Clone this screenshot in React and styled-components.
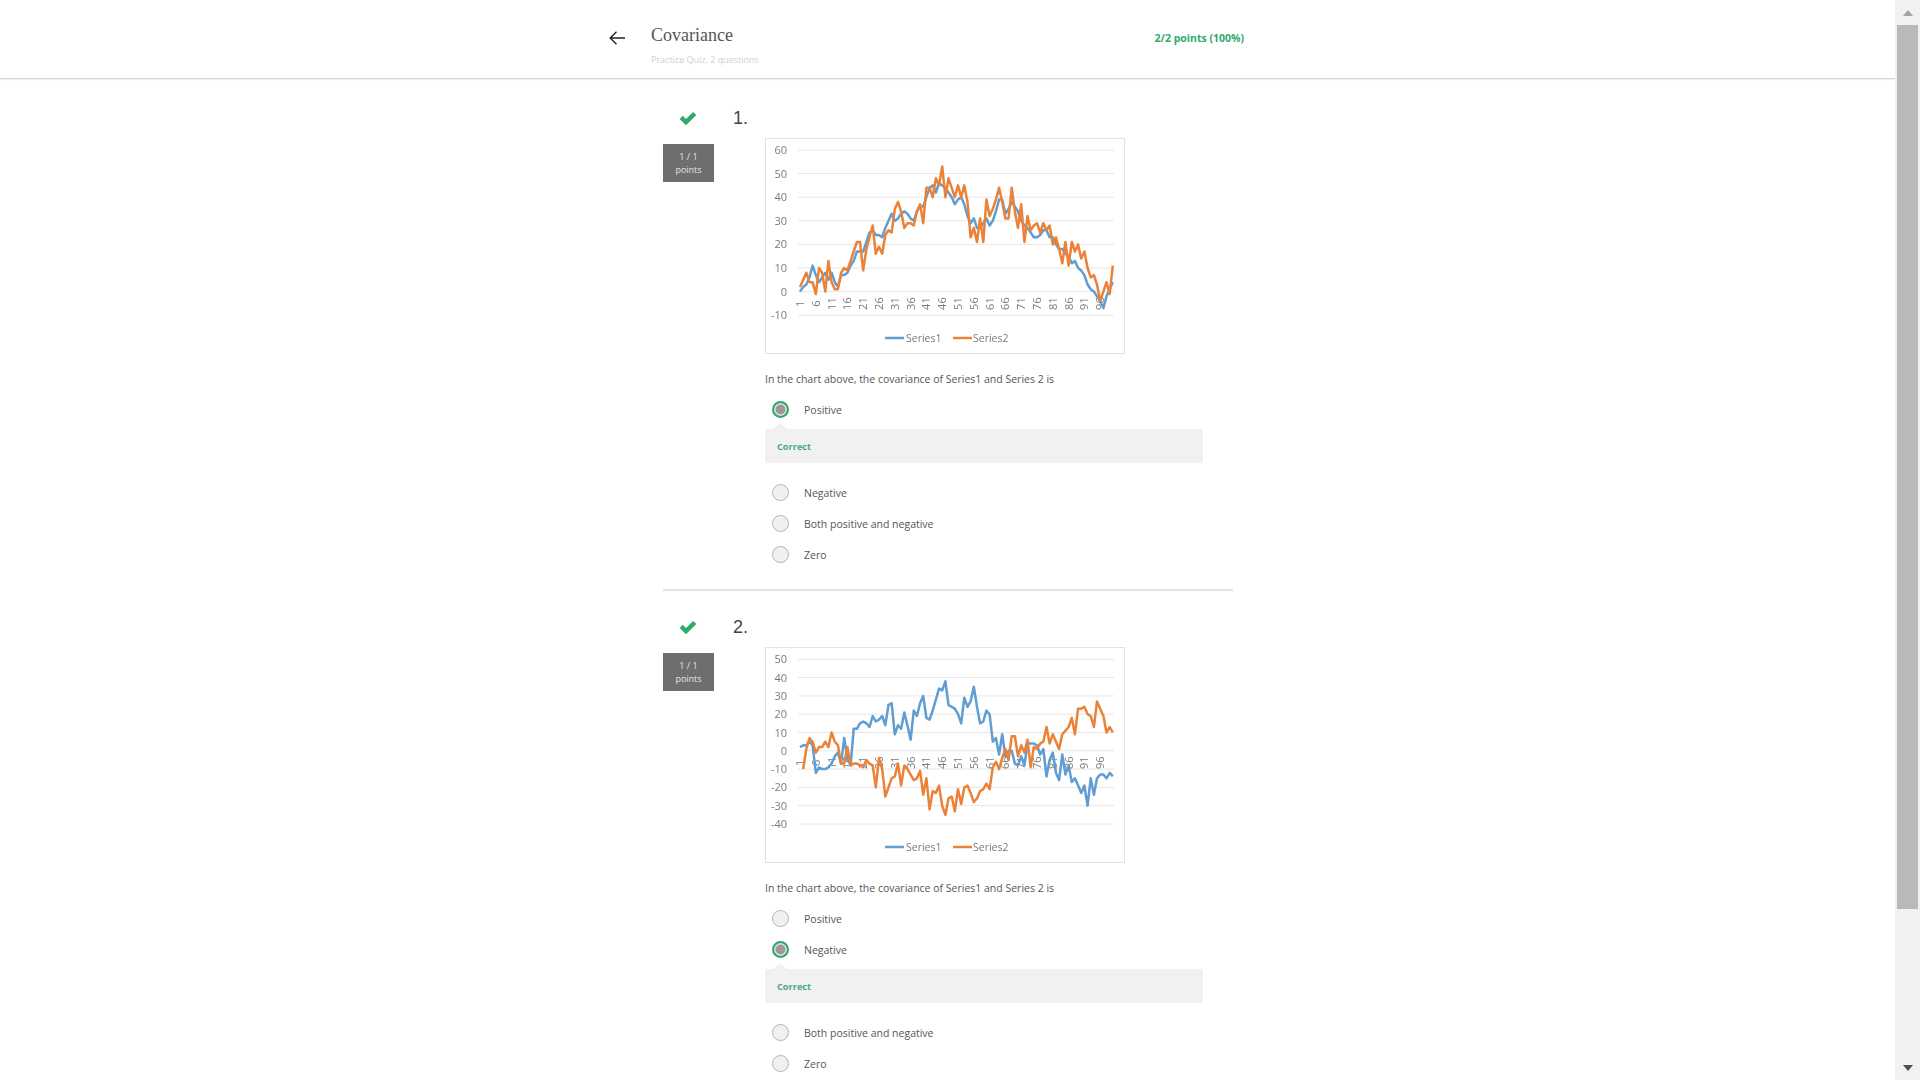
import React from 'react';
import styled, { createGlobalStyle } from 'styled-components';

const GlobalStyle = createGlobalStyle`
  html, body {
    margin: 0;
    height: 100%;
    overflow: hidden;
    background: #fff;
    font-family: "Open Sans", "Liberation Sans", sans-serif;
  }
`;

const chartOne = {
  max: 60,
  min: -10,
  gridTop: 11,
  gridStep: 23.6,
  blue: [0,2,3,6,11,7,4,6,8,5,8,4,2,7,7,8,11,13,17,17,17,21,25,26,24,24,23,27,30,33,30,31,33,34,33,31,30,34,36,36,40,44,45,42,46,45,44,42,40,37,39,40,37,32,29,31,27,27,29,31,28,30,34,39,39,33,35,38,36,34,30,28,27,25,23,23,24,26,26,23,23,20,18,18,16,15,12,13,10,9,7,3,1,0,-2,-4,-7,-2,1,4],
  orange: [2,5,8,4,4,-1,10,8,0,13,4,1,1,8,10,9,13,17,21,21,9,18,23,28,16,19,16,24,26,25,35,38,34,27,29,29,28,34,37,29,44,44,40,48,45,53,40,48,44,40,45,40,45,38,23,27,21,31,21,39,32,35,39,44,38,31,31,44,34,27,37,21,32,26,28,29,25,29,26,28,20,23,18,12,21,11,21,17,20,14,17,10,6,7,3,-4,0,4,-1,11],
};

const chartTwo = {
  max: 50,
  min: -40,
  gridTop: 11.3,
  gridStep: 18.3,
  blue: [2,3,3,5,3,-12,-9,-10,-10,-9,-7,-3,-1,-7,7,-4,-8,12,12,15,16,15,13,19,16,17,19,14,25,26,9,14,12,21,14,6,22,19,26,30,18,17,22,28,34,33,38,25,24,23,20,15,29,24,27,35,24,15,16,22,20,5,7,-2,9,-3,0,0,-7,-8,-3,-8,4,4,4,3,-2,1,-14,-5,-1,-12,-16,-2,-13,-8,-17,-15,-19,-23,-19,-30,-15,-24,-15,-13,-13,-15,-12,-14],
  orange: [null,-10,1,7,5,-1,2,2,5,2,10,5,3,-7,-7,2,-8,-7,-7,-8,-9,-5,-7,-8,-20,-4,-10,-25,-20,-15,-14,-7,-19,-8,-10,-13,-16,-15,-11,-24,-15,-32,-22,-23,-19,-30,-35,-26,-25,-33,-21,-29,-20,-19,-23,-28,-26,-22,-21,-18,-21,-9,-6,-10,-4,1,-5,8,8,-3,3,-1,6,-9,2,1,4,5,13,4,9,5,1,9,11,13,18,9,23,23,24,20,19,13,27,23,19,10,13,10],
};

const AXIS_LEFT = 32;
const AXIS_RIGHT = 348;
const POINT_LEFT = 34;
const POINT_STEP = 3.16;
const BLUE = '#5f9dd3';
const ORANGE = '#ec8238';

const questions = [
  { id: 1, chart: chartOne, picked: 'Positive' },
  { id: 2, chart: chartTwo, picked: 'Negative' },
];

const answers = ['Positive', 'Negative', 'Both positive and negative', 'Zero'];

function ChartPicture({ chart }) {
  const toY = (value) => chart.gridTop + ((chart.max - value) / 10) * chart.gridStep;
  const toPoints = (values) =>
    values
      .map((v, i) => (v === null ? null : `${(POINT_LEFT + i * POINT_STEP).toFixed(1)},${toY(v).toFixed(1)}`))
      .filter(Boolean)
      .join(' ');

  const ticks = [];
  for (let v = chart.max; v >= chart.min; v -= 10) ticks.push(v);
  const labels = [];
  for (let n = 1; n <= 96; n += 5) labels.push(n);

  return (
    <ChartSvg width="358" height="214" viewBox="0 0 358 214">
      {ticks.map((v) => (
        <g key={v}>
          <line x1={AXIS_LEFT} x2={AXIS_RIGHT} y1={toY(v)} y2={toY(v)} stroke="#e6e6e6" strokeWidth="1" />
          <AxisText x="21" y={toY(v) + 4} textAnchor="end">{v}</AxisText>
        </g>
      ))}
      {labels.map((n) => {
        const x = POINT_LEFT + (n - 1) * POINT_STEP + 4;
        const y = toY(0) + 12;
        return (
          <AxisText key={n} x={x} y={y} textAnchor="middle" transform={`rotate(-90 ${x} ${y})`}>
            {n}
          </AxisText>
        );
      })}
      <polyline points={toPoints(chart.blue)} fill="none" stroke={BLUE} strokeWidth="2.5" strokeLinejoin="round" />
      <polyline points={toPoints(chart.orange)} fill="none" stroke={ORANGE} strokeWidth="2.5" strokeLinejoin="round" />
      <line x1="119" x2="138" y1="199" y2="199" stroke={BLUE} strokeWidth="2.5" />
      <LegendText x="140" y="203">Series1</LegendText>
      <line x1="187" x2="206" y1="199" y2="199" stroke={ORANGE} strokeWidth="2.5" />
      <LegendText x="207" y="203">Series2</LegendText>
    </ChartSvg>
  );
}

function Answer({ label, picked }) {
  return (
    <AnswerRow>
      <RadioMark $picked={picked} />
      <AnswerLabel>{label}</AnswerLabel>
    </AnswerRow>
  );
}

function Question({ question, last }) {
  return (
    <QuestionBlock $last={last}>
      <QuestionHead>
        <CheckCell>
          <svg width="18" height="15" viewBox="0 0 17 14">
            <path d="M0.6 7.4 L3.5 4.4 L6.6 7.5 L13.3 0.8 L16.4 3.7 L6.6 13.4 Z" fill="#2eaa6e" />
          </svg>
        </CheckCell>
        <QuestionNumber>{question.id}.</QuestionNumber>
      </QuestionHead>
      <QuestionBody>
        <PointsBadge>
          <span>1 / 1</span>
          <span>points</span>
        </PointsBadge>
        <QuestionContent>
          <ChartFrame>
            <ChartPicture chart={question.chart} />
          </ChartFrame>
          <Prompt>In the chart above, the covariance of Series1 and Series 2 is</Prompt>
          <AnswerList>
            {answers.map((label) => (
              <React.Fragment key={label}>
                <Answer label={label} picked={label === question.picked} />
                {label === question.picked && <Feedback>Correct</Feedback>}
              </React.Fragment>
            ))}
          </AnswerList>
        </QuestionContent>
      </QuestionBody>
    </QuestionBlock>
  );
}

export default function App() {
  return (
    <Page>
      <GlobalStyle />
      <Main>
        <Header>
          <HeaderInner>
            <BackLink>
              <svg width="16" height="14" viewBox="0 0 16 14">
                <path d="M16 7 H1.5 M7.5 0.8 L1.2 7 L7.5 13.2" fill="none" stroke="#222" strokeWidth="1.4" />
              </svg>
            </BackLink>
            <HeaderTitles>
              <Title>Covariance</Title>
              <Subtitle>Practice Quiz, 2 questions</Subtitle>
            </HeaderTitles>
            <Score>2/2 points (100%)</Score>
          </HeaderInner>
        </Header>
        <Content>
          {questions.map((q, i) => (
            <Question key={q.id} question={q} last={i === questions.length - 1} />
          ))}
        </Content>
      </Main>
      <ScrollTrack>
        <ScrollArrow $up />
        <ScrollThumb />
        <ScrollRest />
        <ScrollArrow />
      </ScrollTrack>
    </Page>
  );
}

const Page = styled.div`
  display: flex;
  height: 1080px;
  overflow: hidden;
`;

const Main = styled.main`
  flex: 1;
  min-width: 0;
`;

const Header = styled.header`
  height: 78px;
  border-bottom: 1px solid #d6d6d6;
  box-shadow: 0 1px 1px rgba(0, 0, 0, 0.06);
`;

const HeaderInner = styled.div`
  display: flex;
  width: 635px;
  height: 100%;
  margin-left: 609px;
`;

const BackLink = styled.div`
  display: flex;
  align-items: center;
  width: 42px;
  height: 14px;
  margin-top: 31px;
`;

const HeaderTitles = styled.div`
  flex: 1;
  padding-top: 24px;
`;

const Title = styled.div`
  font-family: "Liberation Serif", serif;
  font-size: 18px;
  line-height: 22px;
  color: #555;
`;

const Subtitle = styled.div`
  margin-top: 8px;
  font-size: 9px;
  line-height: 12px;
  color: #cfcfcf;
`;

const Score = styled.div`
  margin-top: 30px;
  font-size: 10.5px;
  line-height: 16px;
  font-weight: 700;
  color: #2eaa6e;
`;

const Content = styled.div`
  width: 570px;
  margin-left: 663px;
`;

const QuestionBlock = styled.section`
  padding-top: 25px;
  padding-bottom: ${({ $last }) => ($last ? '0' : '19px')};
  border-bottom: ${({ $last }) => ($last ? 'none' : '2px solid #e2e2e2')};
  & + & {
    padding-top: 22px;
  }
`;

const QuestionHead = styled.div`
  display: flex;
  align-items: center;
  height: 28px;
`;

const CheckCell = styled.div`
  display: flex;
  justify-content: center;
  width: 50px;
`;

const QuestionNumber = styled.div`
  margin-left: 20px;
  font-family: "Liberation Sans", sans-serif;
  font-size: 18px;
  line-height: 30px;
  color: #444;
`;

const QuestionBody = styled.div`
  display: flex;
  gap: 51px;
  margin-top: 6px;
`;

const PointsBadge = styled.div`
  display: flex;
  flex-direction: column;
  justify-content: center;
  align-items: center;
  flex: none;
  width: 51px;
  height: 38px;
  margin-top: 6px;
  background: #6e6e6e;
  font-size: 9px;
  line-height: 13px;
  color: #e4e4e4;
`;

const QuestionContent = styled.div`
  flex: 1;
`;

const ChartFrame = styled.div`
  width: 360px;
  height: 216px;
  box-sizing: border-box;
  border: 1px solid #e2e2e2;
`;

const ChartSvg = styled.svg`
  display: block;
  filter: blur(0.5px);
`;

const AxisText = styled.text`
  font-family: "Open Sans", sans-serif;
  font-size: 11px;
  fill: #7a7a7a;
`;

const LegendText = styled(AxisText)`
  font-size: 10.5px;
`;

const Prompt = styled.p`
  margin: 16px 0 0;
  font-size: 10.5px;
  line-height: 18px;
  color: #555;
`;

const AnswerList = styled.div`
  width: 438px;
  margin-top: 6px;
`;

const AnswerRow = styled.div`
  display: flex;
  align-items: center;
  height: 31px;
  padding-left: 7px;
`;

const RadioMark = styled.span`
  flex: none;
  box-sizing: border-box;
  width: 17px;
  height: 17px;
  border-radius: 50%;
  border: ${({ $picked }) => ($picked ? '2px solid #2eaa6e' : '1px solid #b3b3b3')};
  background: ${({ $picked }) => ($picked ? '#999' : '#f0f0f0')};
  box-shadow: ${({ $picked }) => ($picked ? 'inset 0 0 0 1.5px #e8e8e8' : 'none')};
`;

const AnswerLabel = styled.span`
  margin-left: 15px;
  font-size: 10.5px;
  color: #555;
`;

const Feedback = styled.div`
  position: relative;
  display: flex;
  align-items: center;
  height: 34px;
  margin: 4px 0 14px;
  padding-left: 12px;
  background: #f1f1f1;
  font-size: 9.2px;
  font-weight: 700;
  color: #4bab7f;

  &::before {
    content: "";
    position: absolute;
    top: -6px;
    left: 8px;
    border-left: 7px solid transparent;
    border-right: 7px solid transparent;
    border-bottom: 6px solid #f1f1f1;
  }
`;

const ScrollTrack = styled.aside`
  display: flex;
  flex-direction: column;
  align-items: center;
  flex: none;
  width: 25px;
  background: #f1f1f1;
`;

const ScrollArrow = styled.div`
  display: flex;
  justify-content: center;
  align-items: center;
  flex: none;
  height: 25px;

  &::before {
    content: "";
    border-left: 5.5px solid transparent;
    border-right: 5.5px solid transparent;
    ${({ $up }) =>
      $up ? 'border-bottom: 6px solid #a3a3a3;' : 'border-top: 6px solid #505050;'}
  }
`;

const ScrollThumb = styled.div`
  flex: none;
  width: 21px;
  height: 884px;
  background: #b9b9b9;
`;

const ScrollRest = styled.div`
  flex: 1;
`;
